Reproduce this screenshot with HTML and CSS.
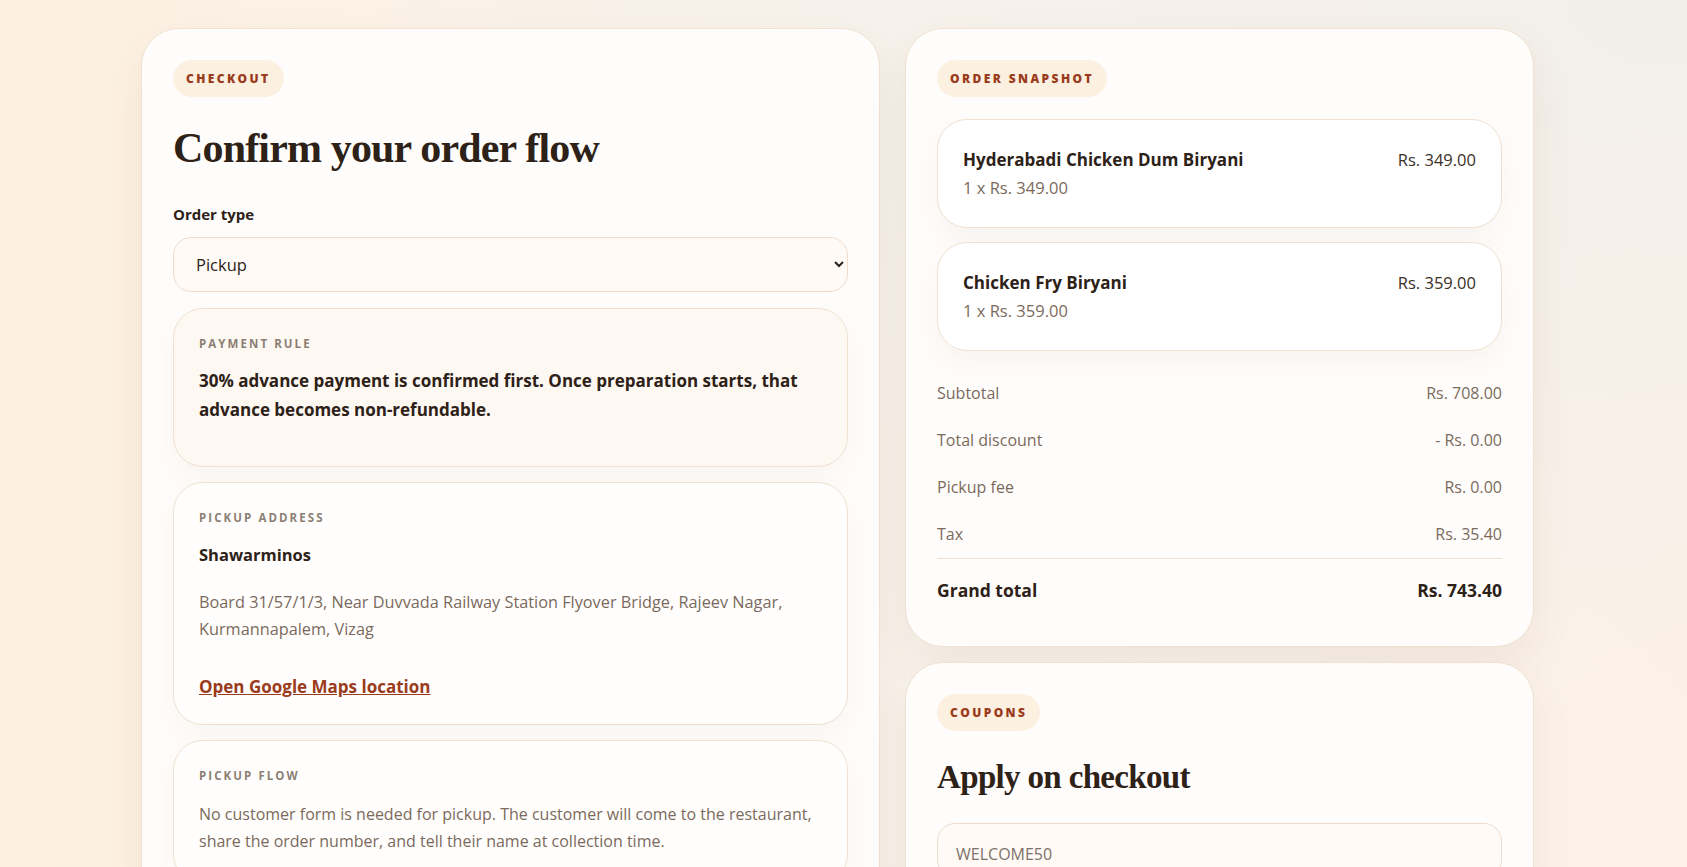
FILE: index.html
```html
<!DOCTYPE html>
<html lang="en">
<head>
  <meta charset="UTF-8">
  <title>Checkout</title>
  <link rel="stylesheet" href="styles.css">
</head>
<body>

<div class="page">
  <div class="layout">

    <section class="card">
      <span class="pill">Checkout</span>
      <h1 class="title">Confirm your order flow</h1>

      <label class="field-label" for="orderType">Order type</label>
      <select id="orderType" class="field">
        <option value="pickup">Pickup</option>
        <option value="delivery">Delivery</option>
      </select>

      <div class="note note-warm">
        <div class="note-label">Payment rule</div>
        <p class="note-strong">30% advance payment is confirmed first. Once preparation starts, that advance becomes non-refundable.</p>
      </div>

      <div class="note note-address">
        <div class="note-label">Pickup address</div>
        <div class="place-name">Shawarminos</div>
        <p class="note-text">Board 31/57/1/3, Near Duvvada Railway Station Flyover Bridge, Rajeev Nagar, Kurmannapalem, Vizag</p>
        <a class="map-link" href="#">Open Google Maps location</a>
      </div>

      <div class="note">
        <div class="note-label">Pickup flow</div>
        <p class="note-text note-text-tight">No customer form is needed for pickup. The customer will come to the restaurant, share the order number, and tell their name at collection time.</p>
      </div>
    </section>

    <div class="side">
      <section class="card">
        <span class="pill">Order snapshot</span>

        <div class="items">
          <div class="item">
            <div class="item-row">
              <span class="item-name">Hyderabadi Chicken Dum Biryani</span>
              <span class="item-price">Rs. 349.00</span>
            </div>
            <div class="item-qty">1 x Rs. 349.00</div>
          </div>
          <div class="item">
            <div class="item-row">
              <span class="item-name">Chicken Fry Biryani</span>
              <span class="item-price">Rs. 359.00</span>
            </div>
            <div class="item-qty">1 x Rs. 359.00</div>
          </div>
        </div>

        <div class="totals">
          <div class="total-row"><span>Subtotal</span><span>Rs. 708.00</span></div>
          <div class="total-row"><span>Total discount</span><span>- Rs. 0.00</span></div>
          <div class="total-row"><span>Pickup fee</span><span>Rs. 0.00</span></div>
          <div class="total-row"><span>Tax</span><span>Rs. 35.40</span></div>
          <div class="total-row grand"><span>Grand total</span><span>Rs. 743.40</span></div>
        </div>
      </section>

      <section class="card">
        <span class="pill">Coupons</span>
        <h2 class="title title-sm">Apply on checkout</h2>
        <input class="field coupon-input" type="text" value="WELCOME50">
      </section>
    </div>

  </div>
</div>

</body>
</html>
```

FILE: styles.css
```css
* { box-sizing: border-box; }

body {
  margin: 0;
  min-height: 100vh;
  font-family: "Open Sans", "Noto Sans", sans-serif;
  color: #2d2118;
  background:
    radial-gradient(ellipse at 100% 0%, #f2efea 0%, rgba(242, 239, 234, 0) 55%),
    linear-gradient(90deg, #fdf0e1 0%, #f9f3ec 50%, #fcf1e8 100%);
}

.page {
  max-width: 1405px;
  margin: 0 auto;
  padding: 28px 12px 40px 0;
}

.layout {
  display: grid;
  grid-template-columns: minmax(0, 1.175fr) minmax(0, 1fr);
  gap: 25px;
  align-items: start;
}

.side {
  display: flex;
  flex-direction: column;
  gap: 15px;
}

.card {
  background: #fffdfb;
  border: 1px solid #f0e1d1;
  border-radius: 38px;
  padding: 31px 31px 32px;
  box-shadow: 0 18px 40px rgba(120, 84, 50, 0.08);
}

.pill {
  display: inline-block;
  height: 37px;
  line-height: 37px;
  padding: 0 13px;
  border-radius: 20px;
  background: #fcf0e0;
  color: #9a3b1c;
  font-size: 12px;
  font-weight: 800;
  letter-spacing: 0.2em;
  text-transform: uppercase;
}

.title {
  margin: 27px 0 0;
  font-family: "Liberation Serif", serif;
  font-size: 42px;
  font-weight: 700;
  line-height: 1.15;
  letter-spacing: -0.02em;
  color: #2d2118;
}

.title-sm {
  font-size: 33px;
  margin-top: 28px;
}

.field-label {
  display: block;
  margin: 32px 0 13px;
  font-size: 15px;
  font-weight: 700;
}

.field {
  display: block;
  width: 100%;
  height: 55px;
  padding: 0 18px;
  border: 1px solid #eedccb;
  border-radius: 18px;
  background: #fffaf6;
  color: #2d2118;
  font-family: inherit;
  font-size: 16.5px;
}

.coupon-input {
  margin-top: 26px;
  padding-top: 8px;
  color: #7d7169;
  font-size: 16px;
}

.note {
  margin-top: 15px;
  padding: 27px 25px 28px;
  border: 1px solid #f0e1d1;
  border-radius: 30px;
  background: #fffefd;
  box-shadow: 0 12px 28px rgba(120, 84, 50, 0.05);
}

.note-warm {
  margin-top: 16px;
  background: #fef8f2;
  padding-bottom: 42px;
}

.note-address { padding-bottom: 26px; }

.note-label {
  font-size: 11.5px;
  font-weight: 700;
  letter-spacing: 0.18em;
  text-transform: uppercase;
  color: #8c7f74;
}

.note-strong {
  margin: 15px 0 0;
  font-size: 17px;
  font-weight: 700;
  line-height: 29px;
}

.place-name {
  margin-top: 18px;
  font-size: 16.5px;
  font-weight: 700;
}

.note-text {
  margin: 23px 0 0;
  font-size: 16.3px;
  line-height: 27px;
  color: #7b6a5c;
}

.note-text-tight {
  margin-top: 18px;
  font-size: 16px;
}

.map-link {
  display: inline-block;
  margin-top: 32px;
  font-size: 17px;
  font-weight: 700;
  color: #9a3b1c;
}

.items {
  margin-top: 22px;
  display: flex;
  flex-direction: column;
  gap: 14px;
}

.item {
  padding: 28px 25px 28px;
  border: 1px solid #f0e1d1;
  border-radius: 30px;
  background: #fff;
  box-shadow: 0 12px 28px rgba(120, 84, 50, 0.06);
}

.item-row {
  display: flex;
  justify-content: space-between;
  align-items: baseline;
}

.item-name {
  font-size: 17px;
  font-weight: 700;
}

.item-price {
  font-size: 16.5px;
  color: #3b2f26;
}

.item-qty {
  margin-top: 5px;
  font-size: 16.5px;
  color: #7b6a5c;
}

.totals {
  margin-top: 19px;
}

.total-row {
  display: flex;
  justify-content: space-between;
  padding: 12px 0;
  font-size: 16px;
  line-height: 23px;
  color: #7b6a5c;
}

.total-row.grand {
  margin-top: 0;
  padding-top: 20px;
  border-top: 1px solid #eee0d3;
  font-size: 17.5px;
  font-weight: 700;
  color: #2d2118;
}
```
